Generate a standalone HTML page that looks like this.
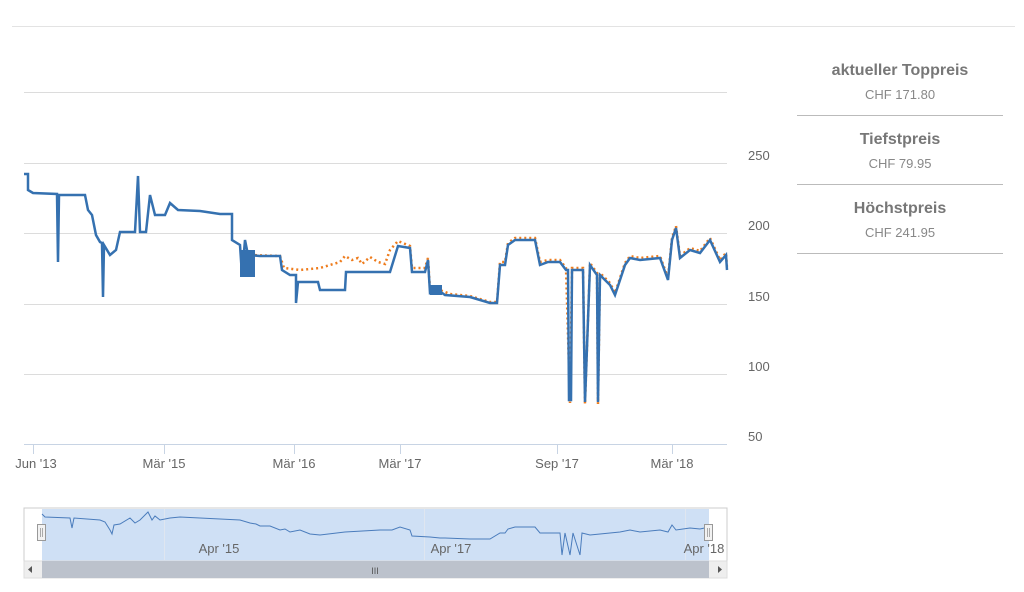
<!DOCTYPE html>
<html><head><meta charset="utf-8"><style>
body{margin:0;width:1024px;height:592px;background:#fff;font-family:"Liberation Sans",sans-serif;overflow:hidden;position:relative}
.side{position:absolute;left:797px;width:206px;text-align:center;color:#777}
.side .h{font-weight:bold;font-size:16px;color:#777}
.side .v{font-size:13px;color:#888;margin-top:7px}
.side .r{border-bottom:1.5px solid #bbb;height:69px;box-sizing:border-box;padding-top:15px}
</style></head><body>
<div style="position:absolute;left:12px;top:26px;width:1003px;height:1px;background:#e3e3e3"></div>
<div class="side" style="top:47px">
<div class="r"><div class="h">aktueller Toppreis</div><div class="v">CHF 171.80</div></div>
<div class="r"><div class="h">Tiefstpreis</div><div class="v">CHF 79.95</div></div>
<div class="r"><div class="h">Höchstpreis</div><div class="v">CHF 241.95</div></div>
</div>
<svg width="1024" height="592" style="position:absolute;left:0;top:0" font-family="Liberation Sans" font-size="13" fill="#666">
<g stroke="#dcdcdc" stroke-width="1">
<line x1="24" x2="727" y1="92.5" y2="92.5"/><line x1="24" x2="727" y1="163.5" y2="163.5"/><line x1="24" x2="727" y1="233.5" y2="233.5"/><line x1="24" x2="727" y1="304.5" y2="304.5"/><line x1="24" x2="727" y1="374.5" y2="374.5"/>
</g>
<line x1="24" x2="727" y1="444.5" y2="444.5" stroke="#c8d4e4"/>
<g stroke="#c8d4e4"><line x1="33.5" x2="33.5" y1="444" y2="454"/><line x1="164.5" x2="164.5" y1="444" y2="454"/><line x1="294.5" x2="294.5" y1="444" y2="454"/><line x1="400.5" x2="400.5" y1="444" y2="454"/><line x1="557.5" x2="557.5" y1="444" y2="454"/><line x1="672.5" x2="672.5" y1="444" y2="454"/></g>
<g text-anchor="middle"><text x="36" y="468">Jun '13</text><text x="164" y="468">Mär '15</text><text x="294" y="468">Mär '16</text><text x="400" y="468">Mär '17</text><text x="557" y="468">Sep '17</text><text x="672" y="468">Mär '18</text></g>
<g><text x="748" y="160">250</text><text x="748" y="230">200</text><text x="748" y="301">150</text><text x="748" y="371">100</text><text x="748" y="441">50</text></g>
<polyline fill="none" stroke="#ee7c1d" stroke-width="2.5" stroke-dasharray="2 3" points="250,255 280,256 284,268 300,270 320,268 330,265 340,262 345,256 352,260 358,258 362,264 370,257 378,262 385,264 390,250 398,241 410,246 412,268 425,268 428,258 430,290 440,290 450,294 470,296 490,302 497,302 500,262 505,262 508,243 515,238 535,238 540,262 548,260 560,260 566,268 570,403 572,268 583,268 585,404 590,263 597,273 598,404 600,273 610,283 615,293 625,263 630,256 640,258 660,256 668,278 672,238 676,226 680,256 690,248 700,251 710,238 720,260 726,253 727,268"/>
<polyline fill="none" stroke="#3571b0" stroke-width="2.5" points="24,174 28,174 28,190 33,193 57,194 58,262 59,195 85,195 88,210 92,215 96,235 100,242 102,243 103,297 104,245 110,255 116,250 120,232 135,232 138,176 140,232 146,232 150,195 155,215 165,215 170,203 178,210 200,211 220,214 232,214 232,240 240,245 242,275 245,240 248,255 260,256 280,256 282,270 290,275 296,275 296,303 298,282 318,282 320,290 345,290 346,272 380,272 390,272 398,246 410,248 412,272 425,272 428,260 430,293 438,290 445,295 470,297 490,303 497,303 500,265 505,265 508,245 515,240 535,240 540,265 548,262 560,262 566,270 568,270 569,400 571,400 572,270 583,270 585,402 590,265 597,275 598,402 600,275 610,285 615,295 625,265 630,258 640,260 660,258 668,280 672,240 676,228 680,258 690,250 700,253 710,240 720,262 726,255 727,270"/>
<rect x="240" y="250" width="15" height="27" fill="#3571b0"/>
<rect x="430" y="285" width="12" height="10" fill="#3571b0"/>
<rect x="24" y="508" width="703" height="53" fill="#fff" stroke="#ccc"/>
<rect x="42" y="509" width="667" height="52" fill="#cfe0f5"/>
<g stroke="#dfe6f0"><line x1="164.5" x2="164.5" y1="509" y2="560"/><line x1="424.5" x2="424.5" y1="509" y2="560"/><line x1="685.5" x2="685.5" y1="509" y2="560"/></g>
<polyline fill="none" stroke="#4a7cbc" stroke-width="1" points="42,514 45,517 70,518 72,528 74,518 100,520 105,522 110,530 112,534 114,525 120,524 130,518 135,523 140,520 148,512 152,520 155,516 160,520 170,518 180,517 240,520 250,523 256,524 260,526 270,526 280,530 285,529 290,532 300,530 310,534 320,535 345,532 380,530 392,530 400,527 410,530 412,536 430,537 440,538 445,538 470,539 490,539 500,533 505,533 508,529 515,527 535,527 540,533 560,533 562,555 565,533 570,555 573,533 580,555 582,533 590,535 600,534 620,532 630,530 640,532 660,530 668,532 672,525 676,530 690,528 700,529 709,527"/>
<text x="219" y="553" text-anchor="middle" fill="#666">Apr '15</text>
<text x="451" y="553" text-anchor="middle" fill="#666">Apr '17</text>
<text x="704" y="553" text-anchor="middle" fill="#666">Apr '18</text>
<rect x="37.5" y="524.5" width="8" height="16" fill="#f2f2f2" stroke="#999"/>
<rect x="704.5" y="524.5" width="8" height="16" fill="#f2f2f2" stroke="#999"/>
<g stroke="#aaa"><line x1="40.5" x2="40.5" y1="528" y2="537"/><line x1="42.5" x2="42.5" y1="528" y2="537"/><line x1="707.5" x2="707.5" y1="528" y2="537"/><line x1="709.5" x2="709.5" y1="528" y2="537"/></g>
<rect x="24" y="561" width="703" height="17" fill="#eee" stroke="#ddd"/>
<rect x="42" y="561" width="667" height="17" fill="#bcc2cc"/>
<text x="375" y="574" text-anchor="middle" font-size="9" fill="#555">III</text>
<path d="M32,566 L28,569.5 L32,573Z" fill="#555"/><path d="M718,566 L722,569.5 L718,573Z" fill="#555"/>
</svg>
</body></html>
